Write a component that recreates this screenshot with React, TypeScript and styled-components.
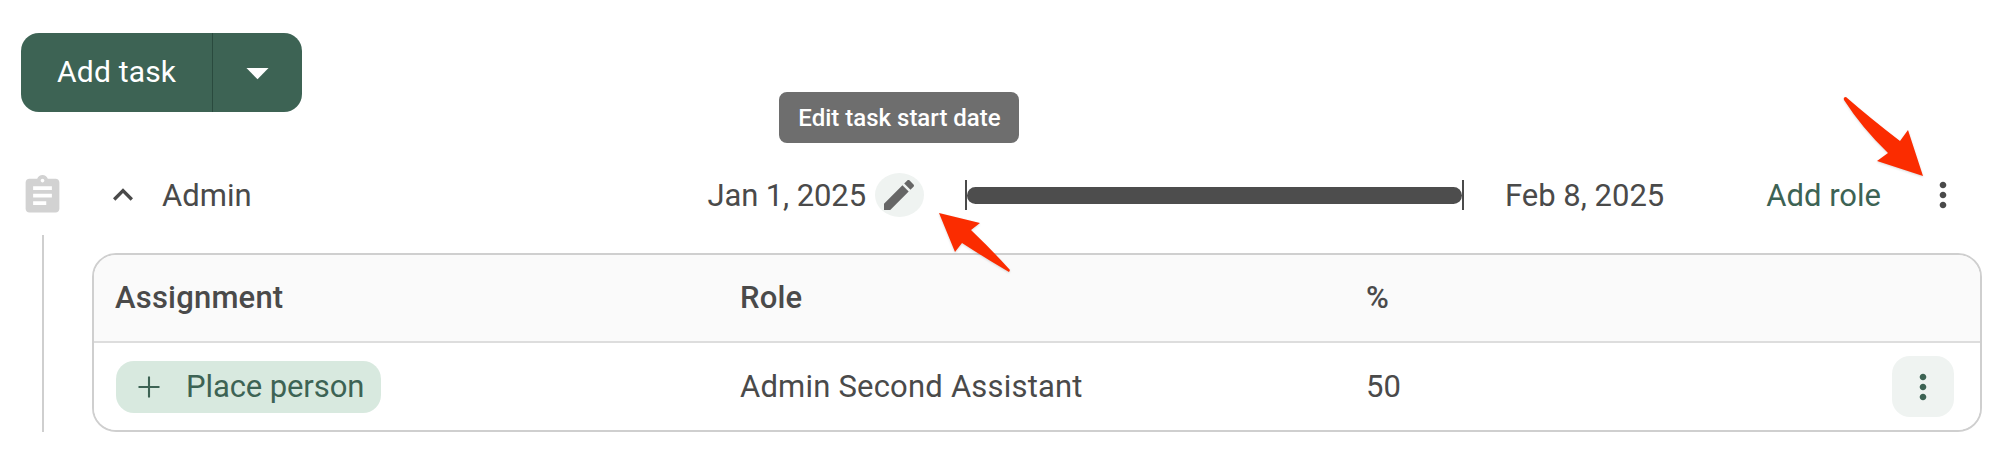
import { FC } from "react";
import styled, { createGlobalStyle } from "styled-components";

const GREEN = "#3d6354";
const TEXT = "#4a4a4a";

const GlobalStyle = createGlobalStyle`
  html, body {
    margin: 0;
    background: #fff;
    font-family: Roboto, "Liberation Sans", sans-serif;
    color: ${TEXT};
  }
`;

const Page = styled.div`
  position: relative;
  width: 2012px;
  height: 470px;
  box-sizing: border-box;
  padding-top: 33px;
  overflow: hidden;
`;

const SplitButton = styled.div`
  display: flex;
  width: 281px;
  height: 79px;
  margin-left: 21px;
  border-radius: 18px;
  overflow: hidden;
  background: ${GREEN};
  color: #fff;
`;

const SplitLabel = styled.div`
  display: flex;
  align-items: center;
  width: 192px;
  padding: 0 0 3px 36px;
  box-sizing: border-box;
  border-right: 1.5px solid #2a4a3e;
  font-size: 30px;
  letter-spacing: 0.2px;
`;

const SplitCaret = styled.div`
  flex: 1;
  display: flex;
  align-items: center;
  justify-content: center;
`;

const TaskRow = styled.div`
  display: flex;
  align-items: center;
  height: 44px;
  margin-top: 61px;
  padding: 0 49px 0 20px;
  font-size: 31px;
`;

const Chevron = styled.svg`
  margin-left: 38px;
`;

const TaskName = styled.span`
  margin-left: 19px;
`;

const Timeline = styled.div`
  display: flex;
  align-items: center;
  margin-left: auto;
`;

const StartDate = styled.span`
  letter-spacing: -0.1px;
`;

const PencilWrap = styled.div`
  position: relative;
  display: flex;
  align-items: center;
  justify-content: center;
  width: 49px;
  height: 44px;
  margin-left: 9px;
  border-radius: 50%;
  background: #eff3f1;
`;

const Tooltip = styled.div`
  position: absolute;
  bottom: calc(100% + 30px);
  left: 50%;
  transform: translateX(-50%);
  display: flex;
  align-items: center;
  justify-content: center;
  width: 240px;
  height: 51px;
  border-radius: 8px;
  background: #6e6e6e;
  color: #fff;
  font-size: 24px;
  font-weight: 500;
  white-space: nowrap;
`;

const Bar = styled.div`
  display: flex;
  align-items: center;
  width: 499px;
  height: 30px;
  margin-left: 41px;
  border-left: 2px solid ${TEXT};
  border-right: 2px solid ${TEXT};
  box-sizing: border-box;

  &::before {
    content: "";
    flex: 1;
    height: 17px;
    border-radius: 9px;
    background: #4d4d4d;
  }
`;

const EndDate = styled.span`
  margin-left: 41px;
`;

const AddRole = styled.span`
  margin-left: 102px;
  color: ${GREEN};
`;

const RowMenu = styled.svg`
  margin-left: 42px;
`;

const Body = styled.div`
  display: flex;
  margin-top: 18px;
  padding-left: 42px;
`;

const Connector = styled.div`
  width: 2px;
  height: 197px;
  background: #cfcfcf;
`;

const Table = styled.div`
  width: 1890px;
  height: 179px;
  margin-top: 18px;
  margin-left: 48px;
  box-sizing: border-box;
  border: 2px solid #cfcfcf;
  border-radius: 24px;
  overflow: hidden;
`;

const TableRow = styled.div<{ $head?: boolean }>`
  display: grid;
  grid-template-columns: 625px 626px 1fr auto;
  align-items: center;
  box-sizing: border-box;
  height: ${(p) => (p.$head ? "88px" : "87px")};
  padding: ${(p) => (p.$head ? "0 26px 2px 21px" : "0 26px 0 21px")};
  font-size: 31px;
  font-weight: ${(p) => (p.$head ? 500 : 400)};
  letter-spacing: 0.2px;
  background: ${(p) => (p.$head ? "#fafafa" : "#fff")};
  border-bottom: ${(p) => (p.$head ? "2px solid #dddddd" : "none")};
`;

const PlaceChip = styled.div`
  display: flex;
  align-items: center;
  width: 265px;
  height: 52px;
  margin-left: 1px;
  padding-left: 15px;
  box-sizing: border-box;
  border-radius: 18px;
  background: #d8e9df;
  color: ${GREEN};
  letter-spacing: -0.1px;
`;

const ChipLabel = styled.span`
  margin-left: 19px;
`;

const MenuButton = styled.div`
  display: flex;
  align-items: center;
  justify-content: center;
  width: 62px;
  height: 61px;
  border-radius: 18px;
  background: #eff3f1;
`;

const Arrows = styled.svg`
  position: absolute;
  top: 0;
  left: 0;
  pointer-events: none;
  filter: drop-shadow(0 1px 1px rgba(0, 0, 0, 0.15));
`;

const DOTS =
  "M12 8c1.1 0 2-.9 2-2s-.9-2-2-2-2 .9-2 2 .9 2 2 2zm0 2c-1.1 0-2 .9-2 2s.9 2 2 2 2-.9 2-2-.9-2-2-2zm0 6c-1.1 0-2 .9-2 2s.9 2 2 2 2-.9 2-2-.9-2-2-2z";

const Icon: FC<{ d: string; size: number; color: string }> = ({ d, size, color }) => (
  <svg width={size} height={size} viewBox="0 0 24 24" fill={color}>
    <path d={d} />
  </svg>
);

const App: FC = () => (
  <Page>
    <GlobalStyle />
    <SplitButton>
      <SplitLabel>Add task</SplitLabel>
      <SplitCaret>
        <Icon d="M7 10l5 5 5-5z" size={53} color="#fff" />
      </SplitCaret>
    </SplitButton>

    <TaskRow>
      <Icon
        d="M19 3h-4.18C14.4 1.84 13.3 1 12 1c-1.3 0-2.4.84-2.82 2H5c-1.1 0-2 .9-2 2v14c0 1.1.9 2 2 2h14c1.1 0 2-.9 2-2V5c0-1.1-.9-2-2-2zm-7 0c.55 0 1 .45 1 1s-.45 1-1 1-1-.45-1-1 .45-1 1-1zm2 14H7v-2h7v2zm3-4H7v-2h10v2zm0-4H7V7h10v2z"
        size={45}
        color="#d2d2d2"
      />
      <Chevron width={40} height={40} viewBox="0 0 24 24" fill={TEXT}>
        <path d="M12 8l-6 6 1.41 1.41L12 10.83l4.59 4.58L18 14z" />
      </Chevron>
      <TaskName>Admin</TaskName>
      <Timeline>
        <StartDate>Jan 1, 2025</StartDate>
        <PencilWrap>
          <Tooltip>Edit task start date</Tooltip>
          <Icon
            d="M3 17.25V21h3.75L17.81 9.94l-3.75-3.75L3 17.25zM20.71 7.04c.39-.39.39-1.02 0-1.41l-2.34-2.34c-.39-.39-1.02-.39-1.41 0l-1.83 1.83 3.75 3.75 1.83-1.83z"
            size={40}
            color="#666"
          />
        </PencilWrap>
        <Bar />
        <EndDate>Feb 8, 2025</EndDate>
        <AddRole>Add role</AddRole>
        <RowMenu width={40} height={40} viewBox="0 0 24 24" fill={TEXT}>
          <path d={DOTS} />
        </RowMenu>
      </Timeline>
    </TaskRow>

    <Body>
      <Connector />
      <Table>
        <TableRow $head>
          <span>Assignment</span>
          <span>Role</span>
          <span>%</span>
        </TableRow>
        <TableRow>
          <PlaceChip>
            <Icon d="M19 12.7h-6.3V19h-1.4v-6.3H5v-1.4h6.3V5h1.4v6.3H19z" size={36} color={GREEN} />
            <ChipLabel>Place person</ChipLabel>
          </PlaceChip>
          <span>Admin Second Assistant</span>
          <span>50</span>
          <MenuButton>
            <Icon d={DOTS} size={40} color={GREEN} />
          </MenuButton>
        </TableRow>
      </Table>
    </Body>

    <Arrows width={2012} height={470} viewBox="0 0 2012 470">
      <path d="M939 213 L980 223 L971 230 Q992 250 1010 270 L1009 272 Q985 258 962 243 L955 252 Z" fill="#fb2c00" />
      <path d="M1923 176 L1908 130 L1900 141 Q1870 118 1846 97 Q1843 97 1844 100 Q1862 128 1888 153 L1877 161 Z" fill="#fb2c00" />
    </Arrows>
  </Page>
);

export default App;
